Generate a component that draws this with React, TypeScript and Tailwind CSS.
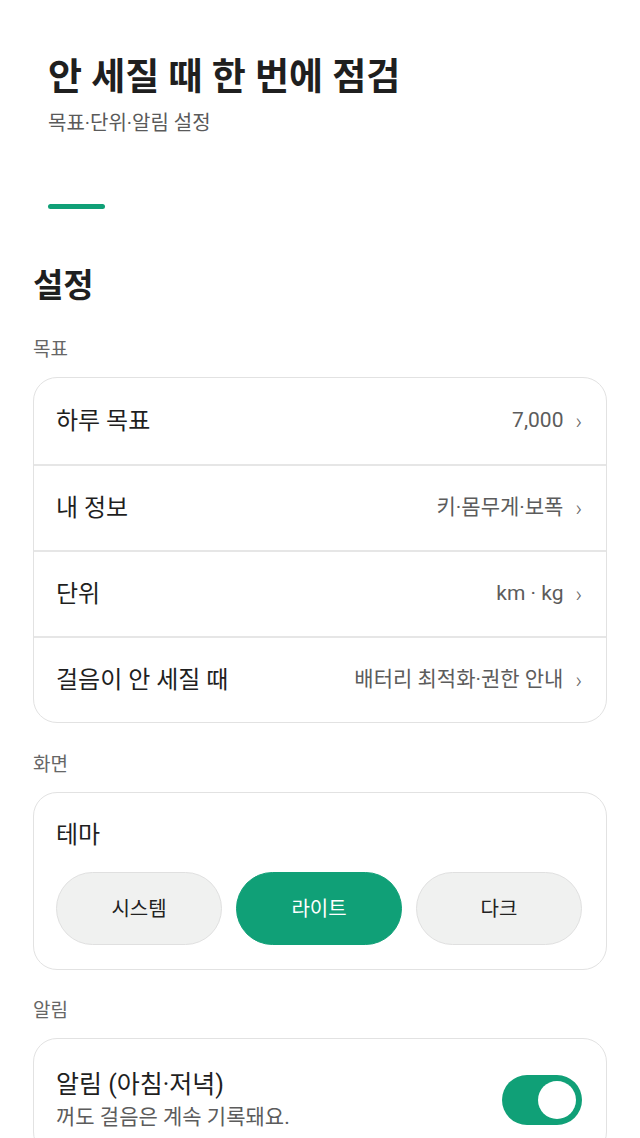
import { useState } from "react";

const font = { fontFamily: 'Roboto, "Noto Sans CJK KR", sans-serif' };

const rows = [
  { label: "하루 목표", value: "7,000" },
  { label: "내 정보", value: "키·몸무게·보폭" },
  { label: "단위", value: "km · kg" },
  { label: "걸음이 안 세질 때", value: "배터리 최적화·권한 안내" },
];

const themes = ["시스템", "라이트", "다크"];

const App = () => {
  const [theme, setTheme] = useState("라이트");
  const [notify, setNotify] = useState(true);

  return (
    <div className="min-h-screen bg-white text-[#1f1f1f]" style={font}>
      {/* Header */}
      <header className="px-12 pt-[52px]">
        <h1 className="text-[37px] font-bold leading-[52px]">안 세질 때 한 번에 점검</h1>
        <p className="mt-[5px] text-[20px] leading-[28px] text-[#5a5a5a]">목표·단위·알림 설정</p>
        <div className="mt-[67px] h-[5px] w-[57px] rounded-full bg-[#10a077]" />
      </header>

      <main className="px-[33px] pt-[54px]">
        <h2 className="text-[33px] font-bold leading-[46px]">설정</h2>

        {/* 목표 */}
        <div className="mt-[28px] text-[19px] leading-[26px] text-[#666]">목표</div>
        <section className="mt-[14px] overflow-hidden rounded-[24px] border border-[#e2e2e2]">
          {rows.map((r, i) => (
            <button
              key={r.label}
              className={`flex h-[86px] w-full items-center justify-between pl-[22px] pr-6 text-left ${
                i > 0 ? "border-t-2 border-[#e6e6e6]" : ""
              }`}
            >
              <span className="text-[24px] leading-[32px]">{r.label}</span>
              <span className="flex items-center gap-[12px] text-[21px] text-[#5c5c5c]">
                {r.value}
                <span className="text-[22px] font-light text-[#666]">›</span>
              </span>
            </button>
          ))}
        </section>

        {/* 화면 */}
        <div className="mt-[29px] text-[19px] leading-[26px] text-[#666]">화면</div>
        <section className="mt-[14px] rounded-[24px] border border-[#e2e2e2] pl-[22px] pr-6 pb-6 pt-[26px]">
          <div className="text-[24px] leading-[32px]">테마</div>
          <div className="mt-[21px] grid grid-cols-3 gap-[14px]">
            {themes.map((t) => (
              <button
                key={t}
                onClick={() => setTheme(t)}
                className={`h-[73px] rounded-full border text-[20px] ${
                  theme === t
                    ? "border-[#10a077] bg-[#10a077] text-white"
                    : "border-[#e0e0e0] bg-[#f0f1f0] text-[#222]"
                }`}
              >
                {t}
              </button>
            ))}
          </div>
        </section>

        {/* 알림 */}
        <div className="mt-[28px] text-[19px] leading-[26px] text-[#666]">알림</div>
        <section className="mt-[14px] rounded-[24px] border border-[#e2e2e2] pl-[22px] pr-6 pb-6 pt-[30px]">
          <div className="flex items-center justify-between">
            <div>
              <div className="text-[25px] leading-[32px]">알림 (아침·저녁)</div>
              <div className="mt-[2px] text-[21px] leading-[28px] text-[#5c5c5c]">꺼도 걸음은 계속 기록돼요.</div>
            </div>
            <button
              onClick={() => setNotify(!notify)}
              className={`flex h-[50px] w-[80px] items-center rounded-full px-[6px] ${
                notify ? "justify-end bg-[#10a077]" : "justify-start bg-[#ccc]"
              }`}
            >
              <span className="h-[38px] w-[38px] rounded-full bg-white" />
            </button>
          </div>
        </section>
      </main>
    </div>
  );
};

export default App;
